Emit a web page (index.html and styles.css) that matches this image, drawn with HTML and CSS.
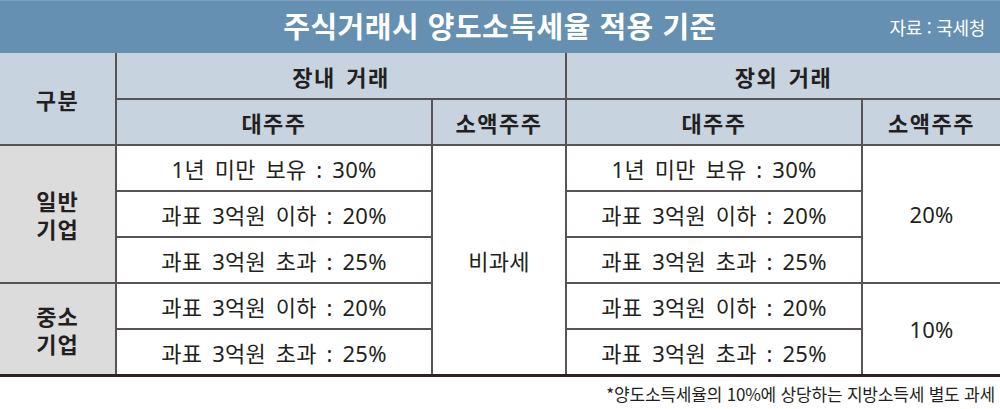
FILE: index.html
```html
<!DOCTYPE html>
<html lang="ko">
<head>
<meta charset="utf-8">
<link rel="stylesheet" href="styles.css">
</head>
<body>
<div class="wrap">
  <div class="title">
    <h1 class="title-text">주식거래시 양도소득세율 적용 기준</h1>
    <span class="source">자료 : 국세청</span>
  </div>
  <table class="tax">
    <colgroup>
      <col class="c0"><col class="c1"><col class="c2"><col class="c3"><col class="c4">
    </colgroup>
    <thead>
      <tr class="h1">
        <th rowspan="2" class="corner">구분</th>
        <th colspan="2">장내 거래</th>
        <th colspan="2" class="last">장외 거래</th>
      </tr>
      <tr class="h2">
        <th>대주주</th>
        <th>소액주주</th>
        <th>대주주</th>
        <th class="last">소액주주</th>
      </tr>
    </thead>
    <tbody>
      <tr>
        <th rowspan="3" class="side">일반<br>기업</th>
        <td>1년 미만 보유 : 30%</td>
        <td rowspan="5">비과세</td>
        <td>1년 미만 보유 : 30%</td>
        <td rowspan="3" class="last">20%</td>
      </tr>
      <tr>
        <td>과표 3억원 이하 : 20%</td>
        <td>과표 3억원 이하 : 20%</td>
      </tr>
      <tr>
        <td>과표 3억원 초과 : 25%</td>
        <td>과표 3억원 초과 : 25%</td>
      </tr>
      <tr>
        <th rowspan="2" class="side">중소<br>기업</th>
        <td>과표 3억원 이하 : 20%</td>
        <td>과표 3억원 이하 : 20%</td>
        <td rowspan="2" class="last">10%</td>
      </tr>
      <tr>
        <td>과표 3억원 초과 : 25%</td>
        <td>과표 3억원 초과 : 25%</td>
      </tr>
    </tbody>
  </table>
  <p class="note">*양도소득세율의 10%에 상당하는 지방소득세 별도 과세</p>
</div>
</body>
</html>
```
FILE: styles.css
```css
* { box-sizing: border-box; }
html, body {
  margin: 0;
  padding: 0;
  background: #ffffff;
}
body {
  width: 1000px;
  height: 409px;
  overflow: hidden;
  font-family: "Noto Sans CJK KR", "Noto Sans", sans-serif;
  color: #231f20;
}
.wrap {
  width: 1000px;
}
.title {
  position: relative;
  height: 53px;
  background: #6590b1;
  border-top: 1px solid #7c9fbd;
  display: flex;
  align-items: center;
  justify-content: center;
}
.title-text {
  margin: 0;
  font-size: 29px;
  font-weight: 700;
  color: #ffffff;
  letter-spacing: 0.5px;
  line-height: 1;
  padding-bottom: 4px;
}
.source {
  position: absolute;
  right: 15px;
  top: 13px;
  font-size: 18px;
  color: #ffffff;
  letter-spacing: -0.3px;
}
.tax {
  width: 1000px;
  border-collapse: collapse;
  table-layout: fixed;
  border-bottom: 3px solid #2b2223;
}
.c0 { width: 116px; }
.c1 { width: 316px; }
.c2 { width: 134px; }
.c3 { width: 296px; }
.c4 { width: 138px; }
.tax th, .tax td {
  border: 2px solid #595355;
  text-align: center;
  vertical-align: middle;
  padding: 0;
}
.tax thead th {
  background: #c7d4df;
  font-size: 22px;
  font-weight: 700;
  border-top: none;
  letter-spacing: 1.5px;
  word-spacing: 3px;
}
.tax .corner { border-left: none; }
.tax .last { border-right: none; }
.tax tr.h1 { height: 46px; }
.tax tr.h2 { height: 46px; }
.tax tbody tr { height: 46px; }
.tax .side {
  background: #dcdcdc;
  font-size: 22px;
  font-weight: 700;
  line-height: 28px;
  letter-spacing: 1px;
  border-left: none;
}
.tax td {
  font-family: "Noto Sans", "Noto Sans CJK KR", sans-serif;
  font-size: 22px;
  font-weight: 400;
  letter-spacing: 0.2px;
  word-spacing: 4px;
}
.note {
  margin: 7px 5px 0 0;
  text-align: right;
  font-size: 17px;
  letter-spacing: -0.2px;
  line-height: 20px;
}
```
